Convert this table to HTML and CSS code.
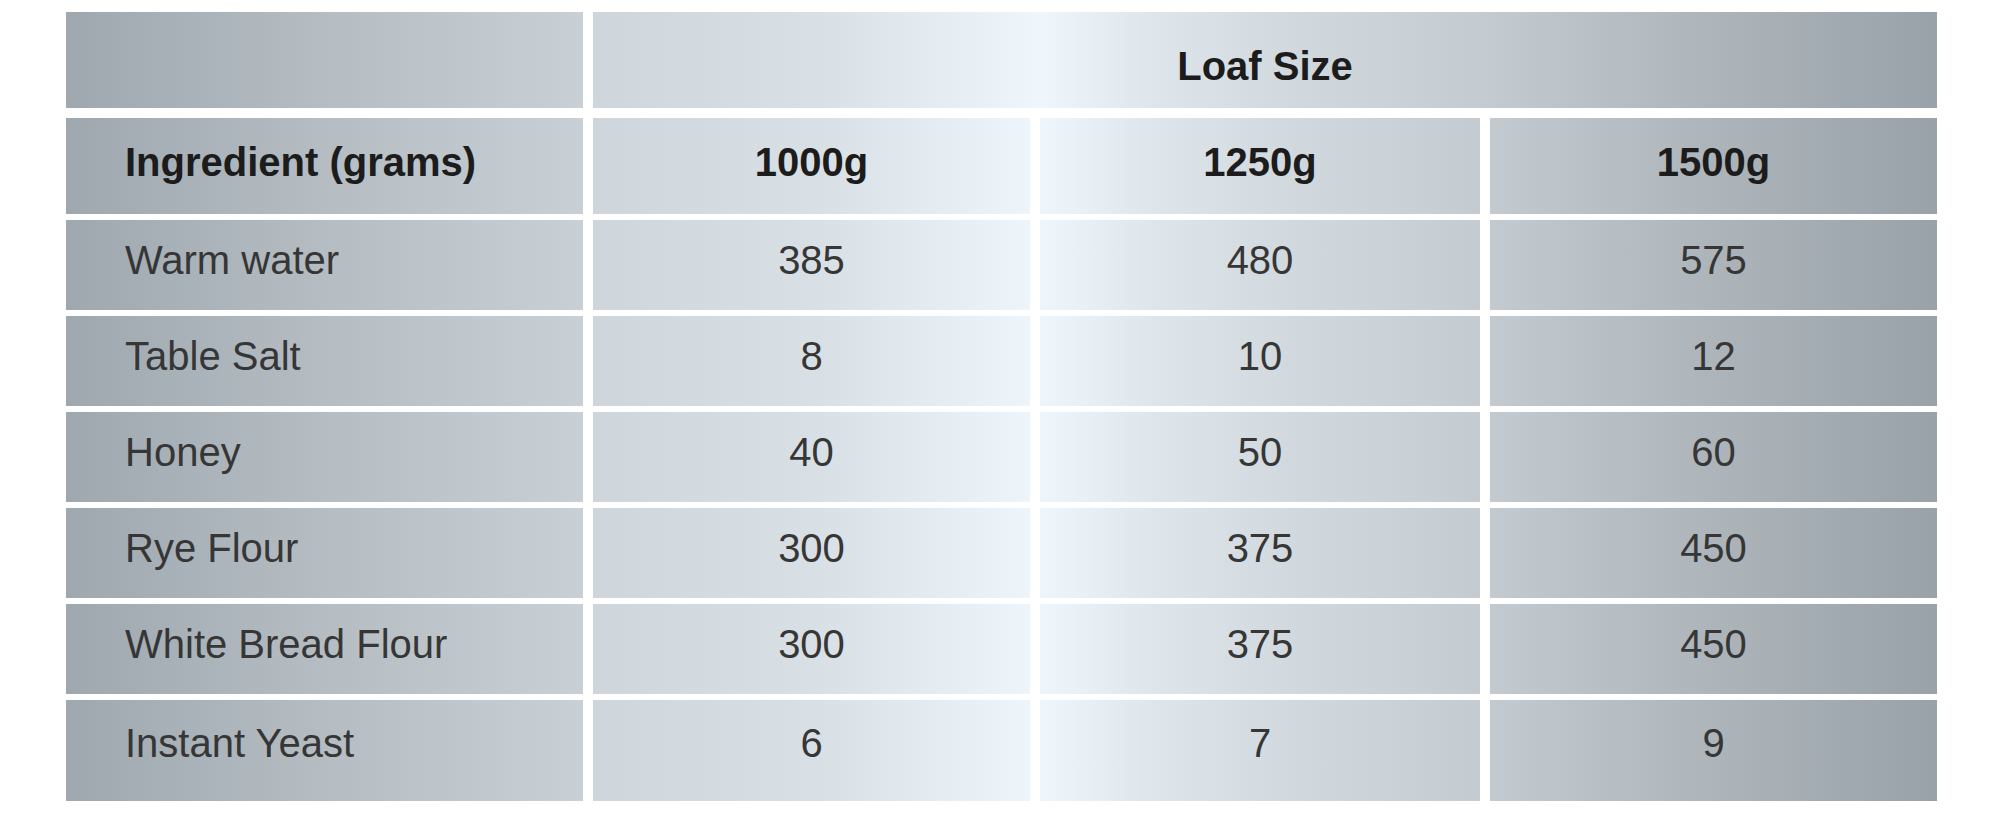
FILE: index.html
```html
<!DOCTYPE html>
<html lang="en">
<head>
<meta charset="utf-8">
<title>Loaf Size</title>
<link rel="stylesheet" href="styles.css">
</head>
<body>
<div class="table">
  <div class="row row-top">
    <div class="cell"></div>
    <div class="cell head">Loaf Size</div>
  </div>
  <div class="row row-head">
    <div class="cell label head">Ingredient (grams)</div>
    <div class="cell head">1000g</div>
    <div class="cell head">1250g</div>
    <div class="cell head">1500g</div>
  </div>
  <div class="row">
    <div class="cell label">Warm water</div>
    <div class="cell">385</div>
    <div class="cell">480</div>
    <div class="cell">575</div>
  </div>
  <div class="row">
    <div class="cell label">Table Salt</div>
    <div class="cell">8</div>
    <div class="cell">10</div>
    <div class="cell">12</div>
  </div>
  <div class="row">
    <div class="cell label">Honey</div>
    <div class="cell">40</div>
    <div class="cell">50</div>
    <div class="cell">60</div>
  </div>
  <div class="row">
    <div class="cell label">Rye Flour</div>
    <div class="cell">300</div>
    <div class="cell">375</div>
    <div class="cell">450</div>
  </div>
  <div class="row">
    <div class="cell label">White Bread Flour</div>
    <div class="cell">300</div>
    <div class="cell">375</div>
    <div class="cell">450</div>
  </div>
  <div class="row row-last">
    <div class="cell label">Instant Yeast</div>
    <div class="cell">6</div>
    <div class="cell">7</div>
    <div class="cell">9</div>
  </div>
</div>
</body>
</html>
```

FILE: styles.css
```css
html, body {
  margin: 0;
  padding: 0;
  background: #ffffff;
}

body {
  font-family: "Liberation Sans", Arial, sans-serif;
  color: #333333;
}

.table {
  display: flex;
  flex-direction: column;
  gap: 6px;
  width: 1871px;
  margin: 12px 0 0 66px;
}

.row {
  display: grid;
  grid-template-columns: 517px 437px 440px 447px;
  column-gap: 10px;
  height: 90px;
}

.row-top {
  grid-template-columns: 517px 1344px;
  height: 96px;
  margin-bottom: 4px;
}

.row-head {
  height: 96px;
}

.row-last {
  height: 101px;
}

.cell {
  display: flex;
  align-items: center;
  justify-content: center;
  padding-bottom: 9px;
  font-size: 40px;
  font-weight: 400;
  color: #363636;
  background-image: linear-gradient(to right,
    #9fa8af 66px,
    #b3bbc1 300px,
    #c8d0d6 582px,
    #ced5db 593px,
    #d9e0e5 820px,
    #eef6fc 1040px,
    #dfe6eb 1150px,
    #d1d8dd 1300px,
    #c3cbd1 1485px,
    #aeb6bc 1700px,
    #99a2a8 1936px);
  background-attachment: fixed;
}

.row-top .cell {
  padding-top: 12px;
  padding-bottom: 0;
}

.row-head .cell {
  padding-bottom: 8px;
}

.row-last .cell {
  padding-bottom: 15px;
}

.label {
  justify-content: flex-start;
  padding-left: 59px;
}

.head {
  font-weight: 700;
  color: #1c1c1c;
}
```
